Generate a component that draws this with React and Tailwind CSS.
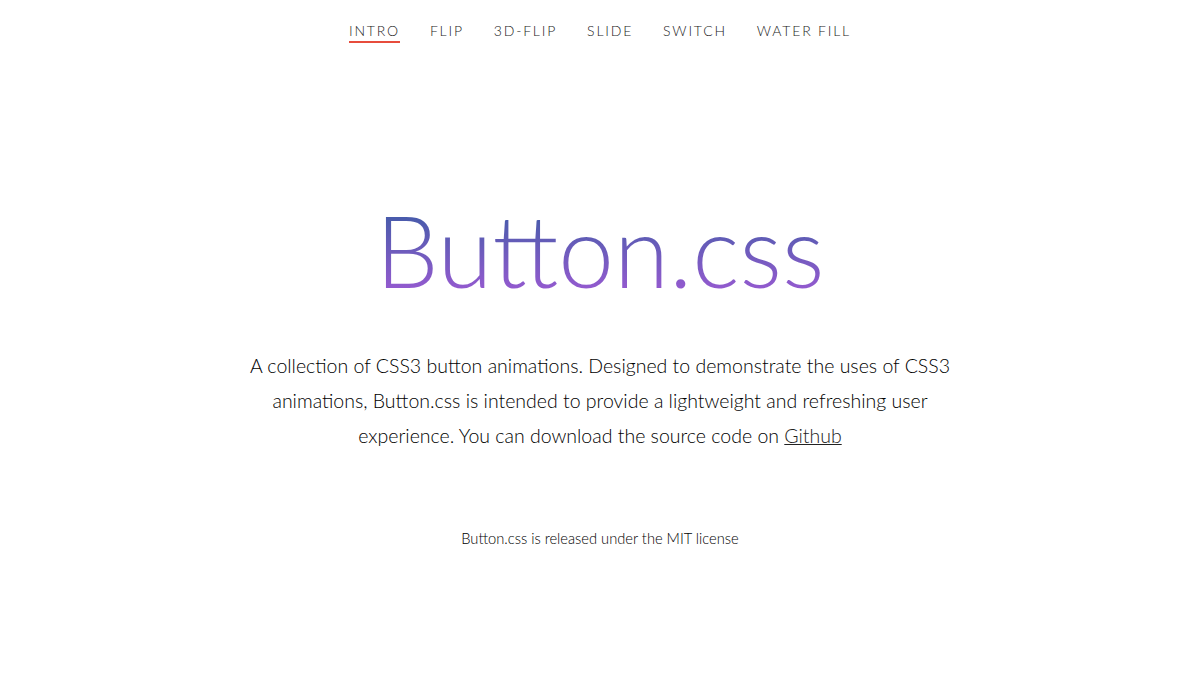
import React from "react";

const links = ["INTRO", "FLIP", "3D-FLIP", "SLIDE", "SWITCH", "WATER FILL"];

export default function App() {
  return (
    <div className="min-h-screen bg-white font-['Lato',sans-serif] text-[#333]">
      {/* Nav */}
      <nav className="flex justify-center gap-[30px] pt-[23px]">
        {links.map((l, i) => (
          <a
            key={l}
            href="#"
            className={`pb-[2px] text-[14px] font-light leading-[16px] tracking-[1.8px] text-[#1a1a1a] ${
              i === 0 ? "border-b-2 border-[#e74c3c]" : "border-b-2 border-transparent"
            }`}
          >
            {l}
          </a>
        ))}
      </nav>

      {/* Hero */}
      <div className="flex flex-col items-center pt-[156px]">
        <h1 className="bg-gradient-to-b from-[#2f5aa3] to-[#9c59d4] bg-clip-text text-[100px] font-light leading-[100px] text-transparent">
          Button.css
        </h1>
        <p className="mt-[49px] w-[720px] text-center text-[19.5px] font-light leading-[35px] text-black">
          A collection of CSS3 button animations. Designed to demonstrate the uses of CSS3 animations,
          Button.css is intended to provide a lightweight and refreshing user experience. You can
          download the source code on{" "}
          <a href="#" className="underline text-[#222]">
            Github
          </a>
        </p>
        <p className="mt-[74px] text-[14.7px] font-light text-black">
          Button.css is released under the MIT license
        </p>
      </div>
    </div>
  );
}
